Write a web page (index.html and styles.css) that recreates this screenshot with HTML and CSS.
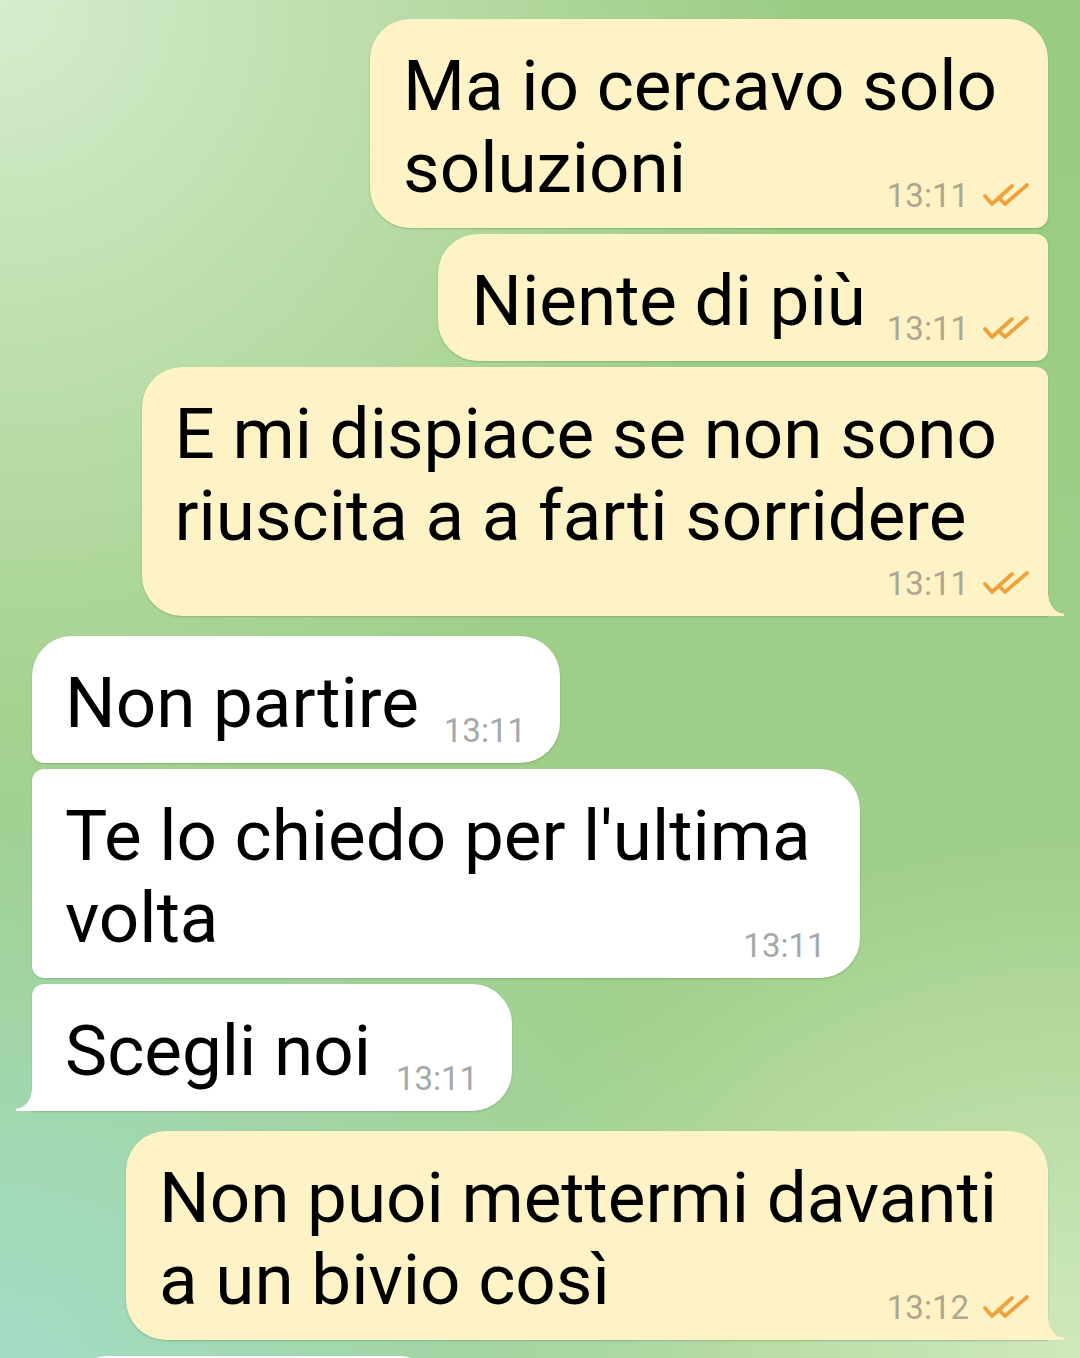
FILE: index.html
```html
<!DOCTYPE html>
<html lang="it">
<head>
    <meta charset="UTF-8">
    <meta name="viewport" content="width=device-width, initial-scale=1.0">
    <title>Chat</title>
    <link rel="stylesheet" href="styles.css">
</head>

<body>
    <main class="chat">
        <!-- my messages -->
        <div class="group out">
            <div class="msg first">
                <div class="text">Ma io cercavo solo<br>soluzioni<span class="meta"><span class="time">13:11</span><svg class="ticks" viewBox="0 0 48 24"><path d="M3 13 L10 21 L30 3"/><path d="M18 16 L23 21 L45 2"/></svg></span></div>
            </div>
            <div class="msg">
                <div class="text">Niente di più<span class="meta"><span class="time">13:11</span><svg class="ticks" viewBox="0 0 48 24"><path d="M3 13 L10 21 L30 3"/><path d="M18 16 L23 21 L45 2"/></svg></span></div>
            </div>
            <div class="msg last">
                <div class="text">E mi dispiace se non sono<br>riuscita a a farti sorridere<span class="meta meta-below"><span class="time">13:11</span><svg class="ticks" viewBox="0 0 48 24"><path d="M3 13 L10 21 L30 3"/><path d="M18 16 L23 21 L45 2"/></svg></span></div>
            </div>
        </div>

        <!-- their messages -->
        <div class="group in">
            <div class="msg first">
                <div class="text">Non partire<span class="meta"><span class="time">13:11</span></span></div>
            </div>
            <div class="msg">
                <div class="text">Te lo chiedo per l'ultima<br>volta<span class="meta"><span class="time">13:11</span></span></div>
            </div>
            <div class="msg last">
                <div class="text">Scegli noi<span class="meta"><span class="time">13:11</span></span></div>
            </div>
        </div>

        <div class="group out">
            <div class="msg first last">
                <div class="text">Non puoi mettermi davanti<br>a un bivio così<span class="meta"><span class="time">13:12</span><svg class="ticks" viewBox="0 0 48 24"><path d="M3 13 L10 21 L30 3"/><path d="M18 16 L23 21 L45 2"/></svg></span></div>
            </div>
        </div>

        <div class="peek"></div>
    </main>
</body>
</html>
```

FILE: styles.css
```css
/* General Styles */
* {
    margin: 0;
    padding: 0;
    box-sizing: border-box;
}

html, body {
    height: 100%;
    overflow: hidden;
}

body {
    font-family: Roboto, 'Noto Sans', Arial, sans-serif;
    color: #000;
    background:
        radial-gradient(ellipse 820px 820px at 0 0, #d6edcd 0%, rgba(214, 237, 205, 0.55) 45%, rgba(214, 237, 205, 0) 100%),
        radial-gradient(ellipse 760px 640px at 0 1358px, #a2dcc5 0%, rgba(162, 220, 197, 0) 100%),
        radial-gradient(ellipse 620px 520px at 1080px 1358px, #d0e9bd 0%, rgba(208, 233, 189, 0) 100%),
        linear-gradient(180deg, #9acb82 0%, #a3d18d 100%);
}

/* Chat column */
.chat {
    display: flex;
    flex-direction: column;
    gap: 20px;
    padding: 19px 32px 0;
}

.group {
    display: flex;
    flex-direction: column;
    gap: 6px;
}

.group.out {
    align-items: flex-end;
}

.group.in {
    align-items: flex-start;
}

/* Bubbles */
.msg {
    position: relative;
    display: flow-root;
    font-size: 71px;
    line-height: 82px;
    padding: 26px 18px 16px 33px;
    border-radius: 12px;
    box-shadow: 0 1px 2px rgba(40, 80, 30, 0.25);
}

.out .msg {
    background: #fef3c6;
    border-top-left-radius: 40px;
    border-bottom-left-radius: 40px;
}

.in .msg {
    background: #fff;
    padding-right: 34px;
    border-top-right-radius: 40px;
    border-bottom-right-radius: 40px;
}

.out .msg.first {
    border-top-right-radius: 40px;
}

.in .msg.first {
    border-top-left-radius: 40px;
}

.out .msg.last {
    border-bottom-right-radius: 0;
}

.in .msg.last {
    border-bottom-left-radius: 0;
}

/* Tails */
.msg.last::after {
    content: '';
    position: absolute;
    bottom: 0;
    width: 16px;
    height: 22px;
}

.out .msg.last::after {
    right: -16px;
    background: radial-gradient(ellipse 16px 20px at 100% 0, rgba(254, 243, 198, 0) 96%, #fef3c6 100%);
}

.in .msg.last::after {
    left: -16px;
    background: radial-gradient(ellipse 16px 20px at 0 0, rgba(255, 255, 255, 0) 96%, #fff 100%);
}

.text {
    padding-right: 33px;
}

.in .text {
    padding-right: 15px;
}

/* Time and ticks */
.meta {
    float: right;
    display: flex;
    align-items: baseline;
    gap: 13px;
    margin: 52px -33px 0 21px;
    font-size: 33px;
    line-height: 33px;
    color: #aca78e;
}

.in .meta {
    margin-right: -15px;
    margin-left: 25px;
    color: #a3a9a9;
}

.meta-below {
    float: none;
    justify-content: flex-end;
    margin-top: 10px;
}

.ticks {
    width: 48px;
    height: 24px;
    fill: none;
    stroke: #eea23a;
    stroke-width: 3.8;
    stroke-linecap: round;
    stroke-linejoin: round;
}

/* Next message, cut by the screen edge */
.peek {
    width: 371px;
    height: 40px;
    margin: -4px 0 0 36px;
    background: #fff;
    border-radius: 40px 40px 0 0;
}
```
